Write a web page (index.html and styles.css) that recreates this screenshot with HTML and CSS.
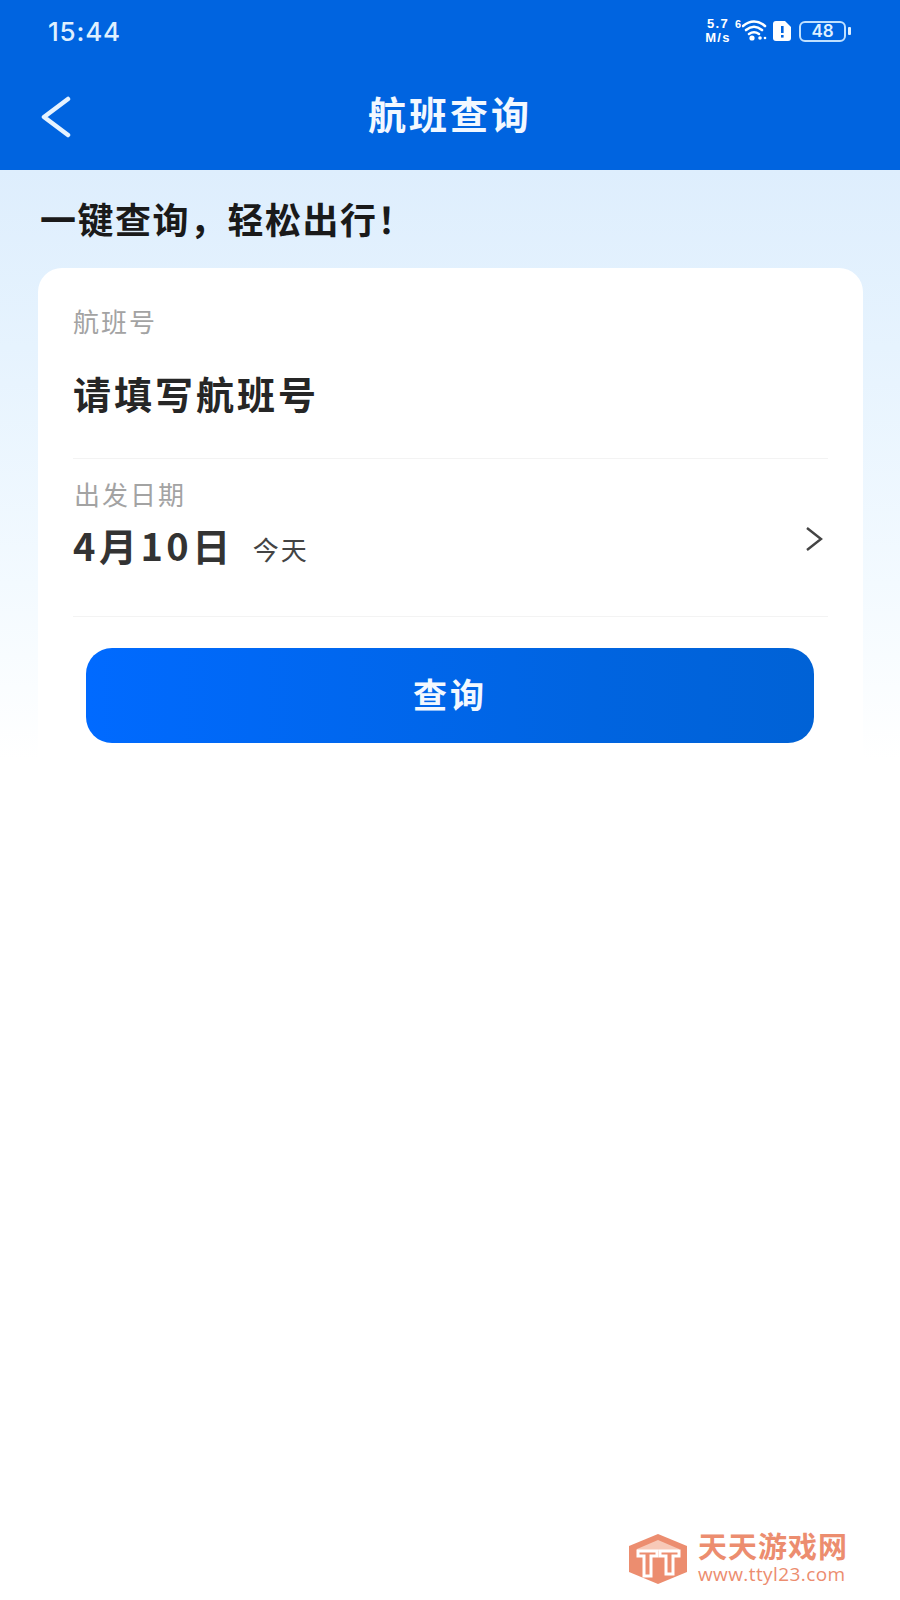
FILE: index.html
```html
<!DOCTYPE html>
<html>

<head>
    <meta charset="utf-8">
    <title>航班查询</title>
    <link rel="stylesheet" href="styles.css">
</head>

<body>
    <div class="header">
        <div class="status">
            <span class="time">15:44</span>
            <div class="status-icons">
                <div class="speed"><span>5.7</span><span>M/s</span></div>
                <span class="wifi-six">6</span>
                <svg class="wifi" width="29" height="26" viewBox="7 0 29 26">
                    <path d="M8 8 Q19 -1 30 8" />
                    <path d="M11 12 Q19 5.500 27 12" />
                    <path d="M14 16 Q19 12.500 24 16" />
                    <circle cx="17" cy="20" r="2.600" class="dot" />
                    <circle cx="25" cy="20" r="1.800" class="dot" />
                    <circle cx="30" cy="20" r="1.300" class="dot" />
                </svg>
                <svg class="notice" width="18" height="20" viewBox="0 0 18 20">
                    <path d="M3 0 H12 L18 6 V17 Q18 20 15 20 H3 Q0 20 0 17 V3 Q0 0 3 0 Z" fill="#fff" />
                    <rect x="8" y="5" width="2.600" height="7" fill="#0064e0" />
                    <rect x="8" y="14" width="2.600" height="2.600" fill="#0064e0" />
                </svg>
                <div class="battery"><span>48</span></div>
                <div class="battery-nub"></div>
            </div>
        </div>
        <div class="nav">
            <svg class="back" width="30" height="42" viewBox="0 0 30 42">
                <path d="M27 3 L3 21 L27 39" />
            </svg>
            <h1 class="nav-title">航班查询</h1>
        </div>
    </div>

    <div class="content">
        <h2 class="slogan">一键查询，轻松出行！</h2>
        <div class="card">
            <div class="field flight">
                <div class="label">航班号</div>
                <div class="placeholder">请填写航班号</div>
            </div>
            <div class="field date">
                <div class="label date-label">出发日期</div>
                <div class="date-row">
                    <span class="date-value">4月10日</span>
                    <span class="date-note">今天</span>
                    <svg class="chevron" width="18" height="26" viewBox="0 0 18 26">
                        <path d="M2 2 L16 13 L2 24" />
                    </svg>
                </div>
            </div>
            <button class="search">查询</button>
        </div>
    </div>

    <div class="watermark">
        <svg width="58" height="50" viewBox="0 0 58 50">
            <path d="M29 0 L58 12 V38 L29 50 L0 38 V12 Z" fill="#ec8d6f" />
            <path d="M8 15 L29 6 L50 15 V17 H8 Z" fill="#f7c9b8" />
            <path d="M9 17 H28 V22 H22 V42 H15 V22 H9 Z" fill="#ec8d6f" stroke="#fff" stroke-width="3" />
            <path d="M31 17 H50 V22 H44 V40 H37 V22 H31 Z" fill="#ec8d6f" stroke="#fff" stroke-width="3" />
        </svg>
        <div class="watermark-text">
            <div class="watermark-name">天天游戏网</div>
            <div class="watermark-url">www.ttyl23.com</div>
        </div>
    </div>
</body>

</html>
```

FILE: styles.css
```css
* {
    box-sizing: border-box;
}

html,
body {
    margin: 0;
    padding: 0;
}

body {
    position: relative;
    width: 900px;
    height: 1600px;
    background-color: #fff;
    font-family: "Noto Sans CJK SC", "Liberation Sans", sans-serif;
    overflow: hidden;
}

.header {
    height: 170px;
    background-color: #0064e0;
    color: #fff;
}

.status {
    height: 62px;
    padding: 0 49px 0 48px;
    display: flex;
    align-items: center;
    justify-content: space-between;
}

.time {
    font-family: Inter, "Liberation Sans", sans-serif;
    font-size: 26px;
    font-weight: 500;
    letter-spacing: 0.8px;
    color: #dff0ff;
}

.status-icons {
    display: flex;
    align-items: center;
}

.speed {
    display: flex;
    flex-direction: column;
    align-items: center;
    font-family: "Liberation Sans", sans-serif;
    font-size: 13px;
    font-weight: 700;
    line-height: 14px;
    letter-spacing: 1.400px;
    margin-right: 4px;
}

.wifi-six {
    width: 7px;
    margin-top: -14px;
    font-family: "Liberation Sans", sans-serif;
    font-size: 11px;
    font-weight: 700;
    line-height: 13px;
}

.wifi {
    margin-right: 2px;
}

.wifi path {
    fill: none;
    stroke: #fff;
    stroke-width: 2.600;
    stroke-linecap: round;
}

.wifi .dot {
    fill: #fff;
}

.notice {
    margin-right: 8px;
}

.battery {
    width: 47px;
    height: 21px;
    border: 2px solid #bfe0ff;
    border-radius: 6px;
    display: flex;
    align-items: center;
    justify-content: center;
    font-family: Inter, "Liberation Sans", sans-serif;
    font-size: 17px;
    font-weight: 600;
    color: #dff0ff;
}

.battery-nub {
    width: 3px;
    height: 8px;
    margin-left: 2px;
    border-radius: 1px;
    background-color: #dff0ff;
}

.nav {
    position: relative;
    height: 108px;
    display: flex;
    align-items: center;
    justify-content: center;
    padding-bottom: 6px;
}

.back {
    position: absolute;
    left: 41px;
    top: 34px;
}

.back path {
    fill: none;
    stroke: #e6f3ff;
    stroke-width: 4.500;
    stroke-linecap: round;
    stroke-linejoin: round;
}

.nav-title {
    margin: 0;
    font-size: 38px;
    font-weight: 700;
    line-height: 44px;
    letter-spacing: 3px;
    color: #f2f8ff;
}

.content {
    height: 590px;
    padding: 23px 37px 0 38px;
    background: linear-gradient(to bottom, #deeefd 0%, #e6f3fe 30%, #f3faff 70%, #fff 100%);
}

.slogan {
    margin: 0 0 25px 2px;
    font-size: 36px;
    font-weight: 700;
    line-height: 50px;
    letter-spacing: 1.500px;
    color: #1a1a1a;
}

.card {
    height: 490px;
    padding: 0 35px;
    background-color: #fff;
    border-radius: 24px 24px 0 0;
    display: flex;
    flex-direction: column;
}

.field {
    border-bottom: 1px solid #f3f3f3;
}

.flight {
    height: 191px;
    padding-top: 35px;
}

.label {
    font-size: 26px;
    line-height: 36px;
    color: #a3a3a3;
    letter-spacing: 2px;
}

.placeholder {
    margin-top: 27px;
    font-size: 38px;
    font-weight: 700;
    line-height: 54px;
    letter-spacing: 3px;
    color: #262626;
}

.date {
    height: 158px;
    padding-top: 17px;
}

.date-label {
    padding-left: 1px;
}

.date-row {
    margin-top: 7px;
    height: 50px;
    display: flex;
    align-items: center;
}

.date-value {
    font-size: 38px;
    font-weight: 700;
    letter-spacing: 3.500px;
    color: #333;
}

.date-note {
    margin-left: 19px;
    padding-top: 8px;
    font-size: 26px;
    letter-spacing: 2px;
    color: #444;
}

.chevron {
    margin-left: auto;
    margin-right: 5px;
    margin-top: -10px;
}

.chevron path {
    fill: none;
    stroke: #444;
    stroke-width: 2.400;
}

.search {
    width: 728px;
    height: 95px;
    margin: 31px 0 0 13px;
    padding-bottom: 6px;
    border: none;
    border-radius: 26px;
    background: linear-gradient(to right, #006aff 0%, #0064e0 70%, #0062d6 100%);
    color: #f2f8ff;
    font-family: inherit;
    font-size: 34px;
    font-weight: 700;
    letter-spacing: 3px;
}

.watermark {
    position: absolute;
    left: 629px;
    top: 1533px;
    display: flex;
    align-items: center;
    gap: 11px;
    color: #ec8d6f;
}

.watermark-text {
    display: flex;
    flex-direction: column;
}

.watermark-name {
    font-family: "Liberation Sans", "Noto Sans CJK SC", sans-serif;
    font-size: 29px;
    font-weight: 700;
    line-height: 30px;
    letter-spacing: 1px;
}

.watermark-url {
    font-family: "Open Sans", "Liberation Sans", sans-serif;
    font-size: 19px;
    line-height: 22px;
    letter-spacing: 0.400px;
}
```
